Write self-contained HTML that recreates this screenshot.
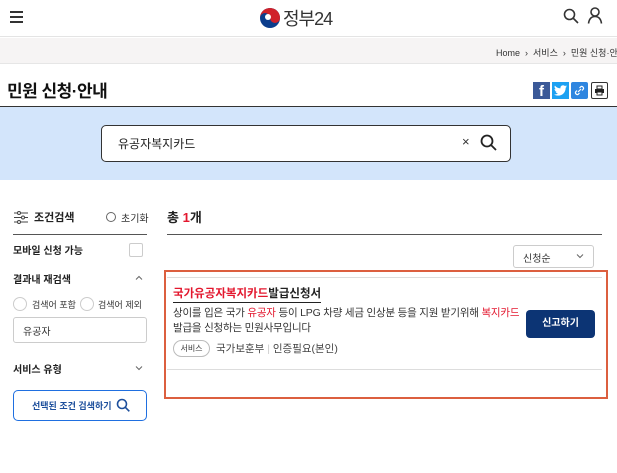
<!DOCTYPE html>
<html><head><meta charset="utf-8"><style>
*{margin:0;padding:0;box-sizing:border-box}
body{width:617px;height:473px;overflow:hidden;background:#fff;font-family:"Liberation Sans","Noto Sans CJK KR",sans-serif;color:#222;position:relative}
.a{position:absolute}
</style></head><body>
<div class="a" style="left:0;top:0;width:617px;height:37px;border-bottom:1px solid #e4e4e4"></div>
<div class="a" style="left:10px;top:11px;width:13px;height:1.5px;background:#333"></div>
<div class="a" style="left:10px;top:16px;width:13px;height:1.5px;background:#333"></div>
<div class="a" style="left:10px;top:21px;width:13px;height:1.5px;background:#333"></div>
<svg class="a" style="left:259px;top:7px" width="22" height="22" viewBox="0 0 22 22"><circle cx="11" cy="11" r="10" fill="#0b3d8c"/><path d="M1 11a10 10 0 0 1 20 0a5 5 0 0 1-10 0a5 5 0 0 0-10 0z" fill="#d0212a"/><circle cx="9" cy="10" r="3" fill="#fff"/></svg>
<div class="a" style="left:283px;top:5px;font-size:18px;color:#333;letter-spacing:-1px">정부24</div>
<svg class="a" style="left:563px;top:8px" width="16" height="16" viewBox="0 0 16 16"><circle cx="6.5" cy="6.5" r="5" fill="none" stroke="#333" stroke-width="1.6"/><path d="M10 10l5 5" stroke="#333" stroke-width="1.6"/></svg>
<svg class="a" style="left:587px;top:7px" width="16" height="17" viewBox="0 0 16 17"><circle cx="8" cy="5" r="4" fill="none" stroke="#333" stroke-width="1.6"/><path d="M1.5 16.5q1-7 6.5-7t6.5 7" fill="none" stroke="#333" stroke-width="1.6"/></svg>
<div class="a" style="left:0;top:38px;width:617px;height:26px;background:#f6f4f4;border-bottom:1px solid #e6e6e6"></div>
<div class="a" style="left:496px;top:46px;font-size:9px;color:#333;white-space:nowrap">Home &nbsp;›&nbsp; 서비스 &nbsp;›&nbsp; 민원 신청·안내</div>
<div class="a" style="left:7px;top:77px;font-size:17px;font-weight:bold;color:#111;letter-spacing:-0.5px">민원 신청·안내</div>
<div class="a" style="left:533px;top:82px;width:17px;height:17px;background:#3b5998;color:#fff;font-weight:bold;font-size:15px;text-align:center;line-height:19px">f</div>
<div class="a" style="left:552px;top:82px;width:17px;height:17px;background:#1da1f2"></div>
<svg class="a" style="left:554px;top:85px" width="13" height="11" viewBox="0 0 24 20"><path d="M24 2.4a10 10 0 0 1-2.8.8A5 5 0 0 0 23.3.5a10 10 0 0 1-3.1 1.2A5 5 0 0 0 11.8 6 14 14 0 0 1 1.7.9a5 5 0 0 0 1.5 6.6A5 5 0 0 1 1 6.9a5 5 0 0 0 4 4.9 5 5 0 0 1-2.2.1 5 5 0 0 0 4.6 3.4A10 10 0 0 1 0 17.3 14 14 0 0 0 7.500 19.5c9 0 14-7.5 14-14v-.6a10 10 0 0 0 2.5-2.5z" fill="#fff"/></svg>
<div class="a" style="left:571px;top:82px;width:17px;height:17px;background:#2f86e0;border-radius:2px"></div>
<svg class="a" style="left:574px;top:85px" width="11" height="11" viewBox="0 0 11 11"><path d="M4 7l3-3M3 5.5L1.8 6.7a1.8 1.8 0 0 0 2.5 2.5L5.5 8M8 5.5l1.2-1.2a1.8 1.8 0 0 0-2.5-2.5L5.5 3" stroke="#fff" fill="none" stroke-width="1.2"/></svg>
<div class="a" style="left:591px;top:82px;width:17px;height:17px;border:1px solid #333;border-radius:2px;background:#fff"></div>
<svg class="a" style="left:594px;top:85px" width="11" height="11" viewBox="0 0 11 11"><rect x="3" y="1" width="5" height="3" fill="none" stroke="#222"/><rect x="1" y="4" width="9" height="4" fill="#222"/><rect x="3" y="7" width="5" height="3" fill="#fff" stroke="#222"/></svg>
<div class="a" style="left:0;top:106px;width:617px;height:1px;background:#333"></div>
<div class="a" style="left:0;top:107px;width:617px;height:73px;background:#d3e5fb"></div>
<div class="a" style="left:101px;top:125px;width:410px;height:37px;background:#fff;border:1px solid #333;border-radius:5px"></div>
<div class="a" style="left:118px;top:135px;font-size:12px;color:#222">유공자복지카드</div>
<div class="a" style="left:462px;top:134px;font-size:13px;color:#333">×</div>
<svg class="a" style="left:480px;top:134px" width="17" height="17" viewBox="0 0 17 17"><circle cx="7" cy="7" r="5.5" fill="none" stroke="#222" stroke-width="1.8"/><path d="M11 11l5 5" stroke="#222" stroke-width="1.8"/></svg>
<svg class="a" style="left:14px;top:211px" width="14" height="13" viewBox="0 0 14 13"><path d="M0 2h14M0 6.5h14M0 11h14" stroke="#444"/><circle cx="5" cy="2" r="1.5" fill="#fff" stroke="#444"/><circle cx="9" cy="6.5" r="1.5" fill="#fff" stroke="#444"/><circle cx="5" cy="11" r="1.5" fill="#fff" stroke="#444"/></svg>
<div class="a" style="left:34px;top:209px;font-size:11px;font-weight:bold;color:#222">조건검색</div>
<div class="a" style="left:106px;top:212px;width:10px;height:10px;border:1px solid #666;border-radius:50%"></div>
<div class="a" style="left:121px;top:210px;font-size:10px;color:#333">초기화</div>
<div class="a" style="left:13px;top:234px;width:134px;height:1px;background:#555"></div>
<div class="a" style="left:13px;top:242px;font-size:10px;font-weight:bold;color:#222">모바일 신청 가능</div>
<div class="a" style="left:129px;top:243px;width:14px;height:14px;border:1px solid #ccc;border-radius:2px"></div>
<div class="a" style="left:13px;top:271px;font-size:10px;font-weight:bold;color:#222">결과내 재검색</div>
<svg class="a" style="left:135px;top:275px" width="8" height="5" viewBox="0 0 8 5"><path d="M1 4.5L4 1.5L7 4.5" fill="none" stroke="#666"/></svg>
<div class="a" style="left:13px;top:297px;width:14px;height:14px;border:1px solid #ccc;border-radius:50%"></div>
<div class="a" style="left:32px;top:298px;font-size:9px;color:#333">검색어 포함</div>
<div class="a" style="left:80px;top:297px;width:14px;height:14px;border:1px solid #ccc;border-radius:50%"></div>
<div class="a" style="left:98px;top:298px;font-size:9px;color:#333">검색어 제외</div>
<div class="a" style="left:13px;top:317px;width:134px;height:26px;border:1px solid #ccc;border-radius:3px"></div>
<div class="a" style="left:23px;top:323px;font-size:10px;color:#333">유공자</div>
<div class="a" style="left:13px;top:361px;font-size:10px;font-weight:bold;color:#222">서비스 유형</div>
<svg class="a" style="left:135px;top:366px" width="8" height="5" viewBox="0 0 8 5"><path d="M1 .5L4 3.5L7 .5" fill="none" stroke="#666"/></svg>
<div class="a" style="left:13px;top:390px;width:134px;height:31px;border:1px solid #1f6fe0;border-radius:5px"></div>
<div class="a" style="left:32px;top:399px;font-size:9px;font-weight:bold;color:#1d4f9c">선택된 조건 검색하기</div>
<svg class="a" style="left:116px;top:398px" width="14" height="14" viewBox="0 0 14 14"><circle cx="6" cy="6" r="4.5" fill="none" stroke="#1d4f9c" stroke-width="1.6"/><path d="M9.3 9.3l4 4" stroke="#1d4f9c" stroke-width="1.6"/></svg>
<div class="a" style="left:167px;top:207px;font-size:13px;font-weight:bold;color:#222">총 <span style="color:#e3172e">1</span>개</div>
<div class="a" style="left:167px;top:234px;width:435px;height:1px;background:#555"></div>
<div class="a" style="left:513px;top:245px;width:81px;height:23px;border:1px solid #ccc;border-radius:3px"></div>
<div class="a" style="left:523px;top:250px;font-size:10px;color:#333">신청순</div>
<svg class="a" style="left:576px;top:254px" width="8" height="5" viewBox="0 0 8 5"><path d="M1 .5L4 3.5L7 .5" fill="none" stroke="#666"/></svg>
<div class="a" style="left:164px;top:270px;width:444px;height:129px;border:2px solid #dc5f3f"></div>
<div class="a" style="left:167px;top:277px;width:435px;height:1px;background:#ddd"></div>
<div class="a" style="left:173px;top:287px;font-size:11.5px;font-weight:bold;color:#222;border-bottom:1px solid #222;line-height:15px"><span style="color:#e3172e">국가유공자복지카드</span>발급신청서</div>
<div class="a" style="left:173px;top:306px;width:350px;font-size:10.5px;line-height:15px;color:#333;letter-spacing:-0.2px">상이를 입은 국가 <span style="color:#e3172e">유공자</span> 등이 LPG 차량 세금 인상분 등을 지원 받기위해 <span style="color:#e3172e">복지카드</span> 발급을 신청하는 민원사무입니다</div>
<div class="a" style="left:173px;top:340px;width:37px;height:17px;border:1px solid #bbb;border-radius:9px;font-size:8px;color:#333;text-align:center;line-height:15px">서비스</div>
<div class="a" style="left:216px;top:341px;font-size:10.5px;color:#444">국가보훈부 <span style="color:#ccc">|</span> 인증필요(본인)</div>
<div class="a" style="left:526px;top:310px;width:69px;height:28px;background:#0c3474;border-radius:4px;color:#fff;font-size:10px;font-weight:bold;text-align:center;line-height:28px">신고하기</div>
<div class="a" style="left:167px;top:369px;width:435px;height:1px;background:#ddd"></div>
</body></html>
